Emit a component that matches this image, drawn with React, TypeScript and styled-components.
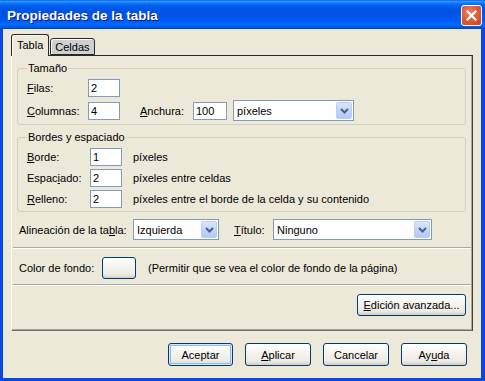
import React from 'react'
import styled, { createGlobalStyle } from 'styled-components'

const GlobalStyle = createGlobalStyle`
  html, body {
    margin: 0;
    padding: 0;
    background: #fff;
  }
  body {
    font-family: "Liberation Sans", Arial, sans-serif;
    font-size: 11px;
    color: #000;
  }
`

const Window = styled.div`
  width: 485px;
  height: 381px;
  box-sizing: border-box;
  display: flex;
  flex-direction: column;
  background: #0a48e4;
`

const TitleBar = styled.div`
  height: 29px;
  flex: none;
  display: flex;
  align-items: center;
  justify-content: space-between;
  padding: 0 3px 0 7px;
  background: linear-gradient(
    to bottom,
    #0058ee 0%,
    #3593ff 4%,
    #288eff 7%,
    #127dff 10%,
    #036ffc 14%,
    #0262ee 20%,
    #0057e5 28%,
    #0054e3 40%,
    #0055eb 60%,
    #005bf5 72%,
    #026afe 82%,
    #0062ef 90%,
    #0052d6 96%,
    #0040ab 100%
  );
`

const Title = styled.div`
  color: #fff;
  font-family: "Liberation Sans", Arial, sans-serif;
  font-weight: bold;
  font-size: 13.5px;
  text-shadow: 1px 1px 0 #0a1883;
  margin-top: 1px;
`

const CloseButton = styled.div`
  width: 21px;
  height: 21px;
  box-sizing: border-box;
  border: 1px solid #fff;
  border-radius: 3px;
  background: radial-gradient(circle at 40% 35%, #e98466 0%, #df5e3c 45%, #c83f1e 100%);
  display: flex;
  align-items: center;
  justify-content: center;
  margin-top: 1px;
`

const Body = styled.div`
  flex: 1;
  margin: 0 4px 3px 3px;
  background: #ece9d8;
  padding: 6px 8px 0 8px;
  display: flex;
  flex-direction: column;
`

const TabStrip = styled.div`
  height: 20px;
  display: flex;
  align-items: flex-end;
  gap: 1px;
`

const Tab = styled.div<{ $active?: boolean }>`
  position: relative;
  z-index: ${p => (p.$active ? 2 : 1)};
  box-sizing: border-box;
  height: ${p => (p.$active ? 22 : 17)}px;
  margin-bottom: ${p => (p.$active ? -1 : 0)}px;
  padding: ${p => (p.$active ? '3px 5px 0' : '1px 4px 0')};
  border: 1px solid #2a2a2a;
  border-bottom: ${p => (p.$active ? 'none' : '1px solid #2a2a2a')};
  border-radius: 3px 3px 0 0;
  background: ${p => (p.$active ? '#ece9d8' : '#cfcfcf')};
  box-shadow: inset 1px 1px 0 #fff;
  font-size: 11px;
  line-height: 14px;
`

const Panel = styled.div`
  height: 276px;
  box-sizing: border-box;
  border-top: 1px solid #2a2a2a;
  border-left: 1px solid #fff;
  border-right: 1px solid #404040;
  border-bottom: 1px solid #716f64;
  box-shadow: inset -1px -1px 0 #aca899;
  display: flex;
  flex-direction: column;
`

const Group = styled.fieldset`
  margin: 6px 6px 0 5px;
  padding: 4px 9px 3px 9px;
  border: 1px solid #d0d0bf;
  border-radius: 3px;
  min-inline-size: 0;
`

const Legend = styled.legend`
  padding: 0 1px;
  line-height: 13px;
`

const Row = styled.div<{ $h?: number }>`
  display: flex;
  align-items: center;
  height: ${p => p.$h ?? 18}px;
  & + & {
    margin-top: 3px;
  }
`

const Label = styled.label<{ $w?: number }>`
  width: ${p => (p.$w ? `${p.$w}px` : 'auto')};
  flex: none;
  white-space: nowrap;
`

const Key = styled.span`
  text-decoration: underline;
`

const TextBox = styled.input<{ $w: number }>`
  width: ${p => p.$w}px;
  height: 18px;
  box-sizing: border-box;
  border: 1px solid #7f9db9;
  background: #fff;
  padding: 0 0 0 2px;
  margin: 0;
  font: inherit;
  color: #000;
  outline: none;
`

const Unit = styled.span<{ $ml?: number }>`
  margin-left: ${p => p.$ml ?? 11}px;
  white-space: nowrap;
`

const Combo = styled.div<{ $w: number; $ml?: number }>`
  width: ${p => p.$w}px;
  height: 21px;
  margin-left: ${p => p.$ml ?? 0}px;
  box-sizing: border-box;
  border: 1px solid #7f9db9;
  background: #fff;
  display: flex;
  align-items: center;
  flex: none;
`

const ComboText = styled.span`
  flex: 1;
  padding-left: 3px;
  white-space: nowrap;
`

const ComboButton = styled.div`
  width: 16px;
  height: 17px;
  margin: 1px;
  box-sizing: border-box;
  border: 1px solid #bccdf7;
  border-radius: 2px;
  background: linear-gradient(to bottom, #dce6fe 0%, #c4d4fb 50%, #b4c8f6 100%);
  display: flex;
  align-items: center;
  justify-content: center;
`

const Line = styled.div`
  height: 0;
  margin: 0 1px;
  border-top: 1px solid #aca899;
  border-bottom: 1px solid #fff;
`

const Section = styled.div<{ $pt: number; $pb: number }>`
  display: flex;
  align-items: center;
  padding: ${p => p.$pt}px 6px ${p => p.$pb}px 7px;
  height: 21px;
`

const Gap = styled.div<{ $w: number }>`
  width: ${p => p.$w}px;
  flex: none;
`

const XpButton = styled.button<{ $w: number; $h?: number; $default?: boolean }>`
  width: ${p => p.$w}px;
  height: ${p => p.$h ?? 23}px;
  box-sizing: border-box;
  margin: 0;
  padding: 0;
  border: 1px solid #003c74;
  border-radius: 3px;
  background: linear-gradient(to bottom, #ffffff 0%, #f5f4ef 40%, #ecebe4 80%, #d6d0c5 100%);
  box-shadow: ${p =>
    p.$default
      ? 'inset 0 0 0 1px #cee7ff, inset 0 0 0 2px #98b8ea'
      : 'inset 0 -1px 0 #d6d0c5'};
  font: inherit;
  color: #000;
  flex: none;
`

const AdvancedRow = styled.div`
  display: flex;
  justify-content: flex-end;
  padding: 8px 6px 0 0;
`

const Footer = styled.div`
  display: flex;
  justify-content: flex-end;
  gap: 12px;
  padding: 12px 6px 0 0;
`

const Chevron = () => (
  <svg width="9" height="6" viewBox="0 0 9 6">
    <path d="M1 1 L4.5 4.5 L8 1" fill="none" stroke="#4d6185" strokeWidth="2" />
  </svg>
)

const Select = ({ w, ml, text }: { w: number; ml?: number; text: string }) => (
  <Combo $w={w} $ml={ml}>
    <ComboText>{text}</ComboText>
    <ComboButton>
      <Chevron />
    </ComboButton>
  </Combo>
)

export default function App() {
  return (
    <>
      <GlobalStyle />
      <Window>
        <TitleBar>
          <Title>Propiedades de la tabla</Title>
          <CloseButton>
            <svg width="11" height="11" viewBox="0 0 11 11">
              <path d="M1.5 1.5 L9.5 9.5 M9.5 1.5 L1.5 9.5" stroke="#fff" strokeWidth="2.2" strokeLinecap="square" />
            </svg>
          </CloseButton>
        </TitleBar>
        <Body>
          <TabStrip>
            <Tab $active>Tabla</Tab>
            <Tab>Celdas</Tab>
          </TabStrip>
          <Panel>
            <Group>
              <Legend>Tamaño</Legend>
              <Row>
                <Label $w={61}><Key>F</Key>ilas:</Label>
                <TextBox $w={32} readOnly value="2" />
              </Row>
              <Row $h={21}>
                <Label $w={61}><Key>C</Key>olumnas:</Label>
                <TextBox $w={32} readOnly value="4" />
                <Gap $w={20} />
                <Label $w={53}><Key>A</Key>nchura:</Label>
                <TextBox $w={34} readOnly value="100" />
                <Select w={121} ml={6} text="píxeles" />
              </Row>
            </Group>
            <Group>
              <Legend>Bordes y espaciado</Legend>
              <Row>
                <Label $w={63}><Key>B</Key>orde:</Label>
                <TextBox $w={32} readOnly value="1" />
                <Unit>píxeles</Unit>
              </Row>
              <Row>
                <Label $w={63}>Espac<Key>i</Key>ado:</Label>
                <TextBox $w={32} readOnly value="2" />
                <Unit>píxeles entre celdas</Unit>
              </Row>
              <Row>
                <Label $w={63}><Key>R</Key>elleno:</Label>
                <TextBox $w={32} readOnly value="2" />
                <Unit>píxeles entre el borde de la celda y su contenido</Unit>
              </Row>
            </Group>
            <Section $pt={7} $pb={7}>
              <Label $w={114}>Alineación de la ta<Key>b</Key>la:</Label>
              <Select w={86} text="Izquierda" />
              <Gap $w={15} />
              <Label $w={39}><Key>T</Key>ítulo:</Label>
              <Select w={159} text="Ninguno" />
            </Section>
            <Line />
            <Section $pt={8} $pb={6}>
              <Label $w={83}>Color de fondo:</Label>
              <XpButton $w={34} $h={22} aria-label="Color de fondo" />
              <Unit $ml={12}>(Permitir que se vea el color de fondo de la página)</Unit>
            </Section>
            <Line />
            <AdvancedRow>
              <XpButton $w={109} $h={22}><Key>E</Key>dición avanzada...</XpButton>
            </AdvancedRow>
          </Panel>
          <Footer>
            <XpButton $w={65} $default>Aceptar</XpButton>
            <XpButton $w={66}><Key>A</Key>plicar</XpButton>
            <XpButton $w={66}>Cancelar</XpButton>
            <XpButton $w={66}>Ay<Key>u</Key>da</XpButton>
          </Footer>
        </Body>
      </Window>
    </>
  )
}
